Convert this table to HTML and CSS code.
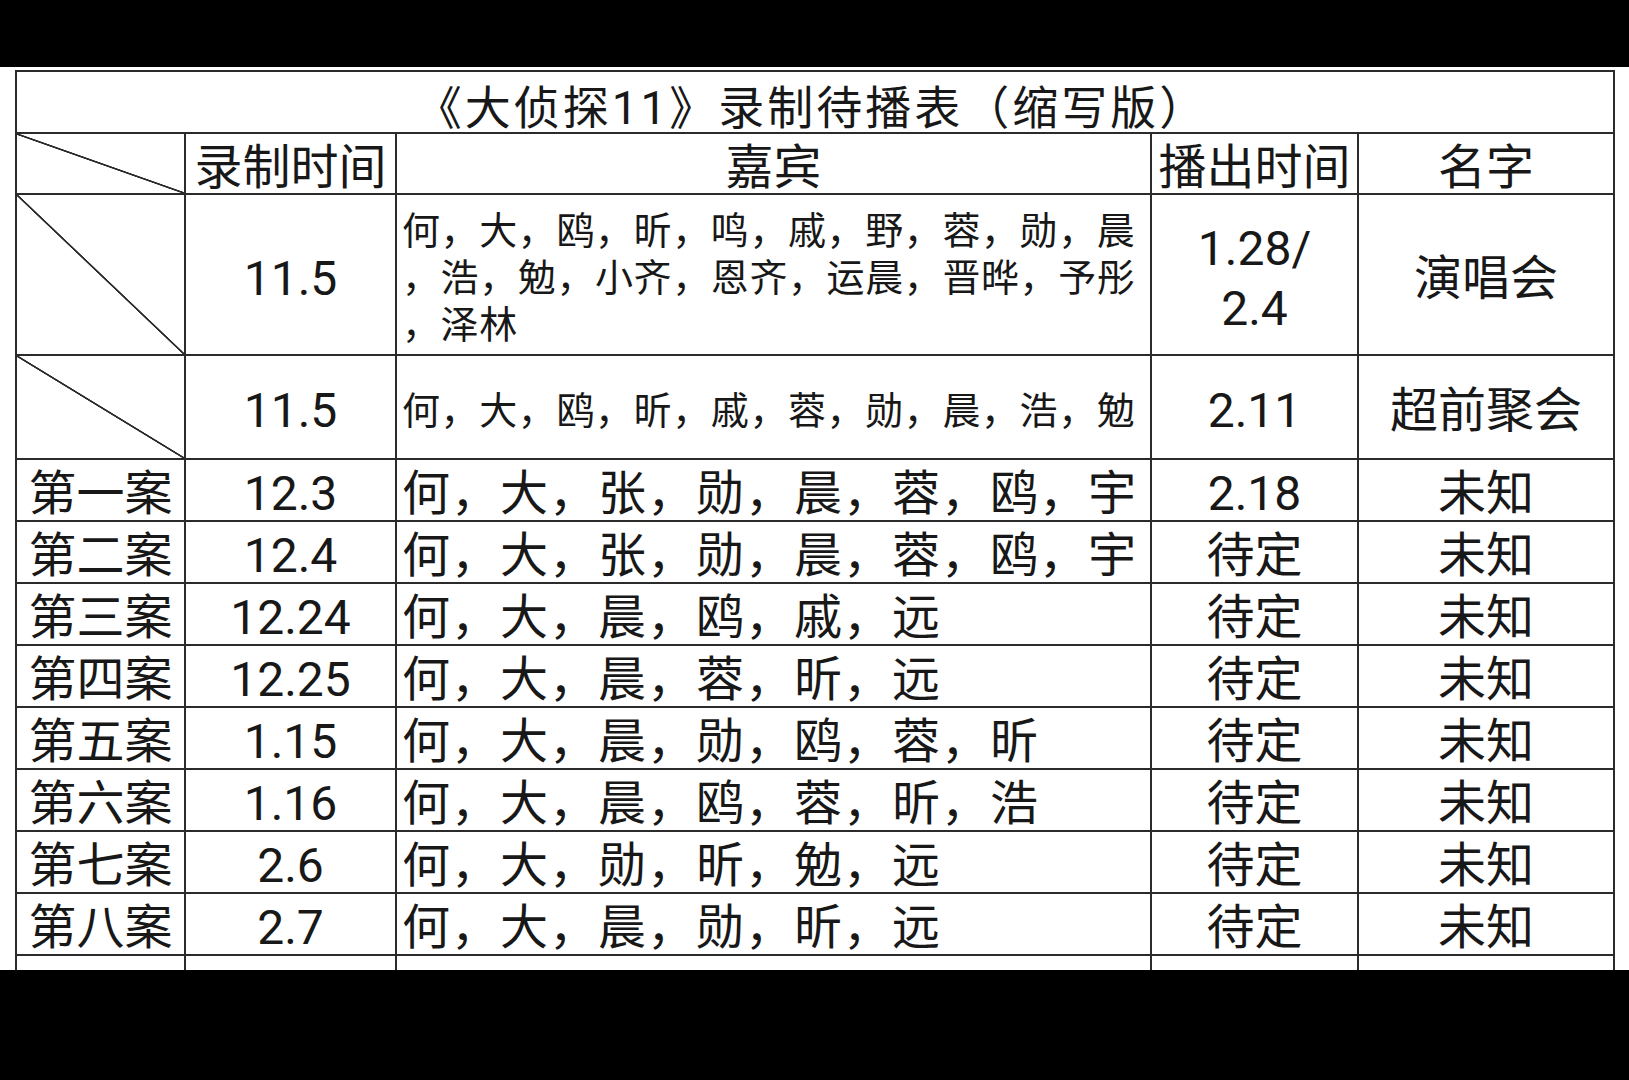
FILE: index.html
```html
<!DOCTYPE html>
<html lang="zh-CN">
<head>
<meta charset="utf-8">
<title>《大侦探11》录制待播表（缩写版）</title>
<link rel="stylesheet" href="styles.css">
</head>
<body>
<div class="sheet">
  <table class="grid">
    <colgroup>
      <col class="c-case">
      <col class="c-rec">
      <col class="c-guest">
      <col class="c-air">
      <col class="c-name">
    </colgroup>
    <tr class="r-title">
      <td colspan="5" class="title">《大侦探11》录制待播表（缩写版）</td>
    </tr>
    <tr class="r-head">
      <td class="diag"></td>
      <td>录制时间</td>
      <td>嘉宾</td>
      <td>播出时间</td>
      <td>名字</td>
    </tr>
    <tr class="r-big">
      <td class="diag"></td>
      <td>11.5</td>
      <td class="guests small"><span class="ln">何，大，鸥，昕，鸣，戚，野，蓉，勋，晨</span><span class="ln">，浩，勉，小齐，恩齐，运晨，晋晔，予彤</span><span class="ln">，泽林</span></td>
      <td class="two"><span class="ln2">1.28/</span><span class="ln2">2.4</span></td>
      <td>演唱会</td>
    </tr>
    <tr class="r-mid">
      <td class="diag"></td>
      <td>11.5</td>
      <td class="guests small">何，大，鸥，昕，戚，蓉，勋，晨，浩，勉</td>
      <td>2.11</td>
      <td>超前聚会</td>
    </tr>
    <tr class="r-case">
      <td>第一案</td><td>12.3</td><td class="guests">何，大，张，勋，晨，蓉，鸥，宇</td><td>2.18</td><td>未知</td>
    </tr>
    <tr class="r-case">
      <td>第二案</td><td>12.4</td><td class="guests">何，大，张，勋，晨，蓉，鸥，宇</td><td>待定</td><td>未知</td>
    </tr>
    <tr class="r-case">
      <td>第三案</td><td>12.24</td><td class="guests">何，大，晨，鸥，戚，远</td><td>待定</td><td>未知</td>
    </tr>
    <tr class="r-case">
      <td>第四案</td><td>12.25</td><td class="guests">何，大，晨，蓉，昕，远</td><td>待定</td><td>未知</td>
    </tr>
    <tr class="r-case">
      <td>第五案</td><td>1.15</td><td class="guests">何，大，晨，勋，鸥，蓉，昕</td><td>待定</td><td>未知</td>
    </tr>
    <tr class="r-case">
      <td>第六案</td><td>1.16</td><td class="guests">何，大，晨，鸥，蓉，昕，浩</td><td>待定</td><td>未知</td>
    </tr>
    <tr class="r-case">
      <td>第七案</td><td>2.6</td><td class="guests">何，大，勋，昕，勉，远</td><td>待定</td><td>未知</td>
    </tr>
    <tr class="r-case">
      <td>第八案</td><td>2.7</td><td class="guests">何，大，晨，勋，昕，远</td><td>待定</td><td>未知</td>
    </tr>
    <tr class="r-case">
      <td></td><td></td><td></td><td></td><td></td>
    </tr>
  </table>
</div>
</body>
</html>
```
FILE: styles.css
```css
html, body {
  margin: 0;
  padding: 0;
  background: #000;
  height: 100%;
  overflow: hidden;
}

.sheet {
  margin-top: 67px;
  height: 903px;
  background: #fff;
  overflow: hidden;
  padding-top: 3px;
  box-sizing: border-box;
}

.grid {
  margin-left: 15px;
  width: 1598px;
  table-layout: fixed;
  border-collapse: collapse;
  font-family: Roboto, "Noto Sans CJK SC", "Noto Sans", sans-serif;
  color: #181818;
  font-size: 48px;
  line-height: 1;
}

.c-case { width: 169px; }
.c-rec { width: 211px; }
.c-guest { width: 755px; }
.c-air { width: 207px; }
.c-name { width: 256px; }

.grid td {
  border: 2px solid #2b2b2b;
  text-align: center;
  vertical-align: middle;
  padding: 8px 0 0 0;
  white-space: nowrap;
}

.r-title { height: 62px; }
.r-head { height: 61px; }
.r-big { height: 161px; }
.r-mid { height: 104px; }
.r-case { height: 62px; }

.grid .title {
  font-size: 46px;
  letter-spacing: 3px;
  padding: 11px 6px 0 0;
}

.grid .guests {
  text-align: left;
  padding-left: 5px;
  letter-spacing: 1px;
}

.grid .small {
  font-size: 38px;
  letter-spacing: 0.6px;
}

.ln {
  display: block;
  height: 47px;
  line-height: 47px;
}

.ln2 {
  display: block;
  height: 60px;
  line-height: 60px;
}

.diag {
  background: linear-gradient(to top right,
    transparent calc(50% - 1.2px),
    #2b2b2b calc(50% - 0.6px),
    #2b2b2b calc(50% + 0.6px),
    transparent calc(50% + 1.2px));
}
```
